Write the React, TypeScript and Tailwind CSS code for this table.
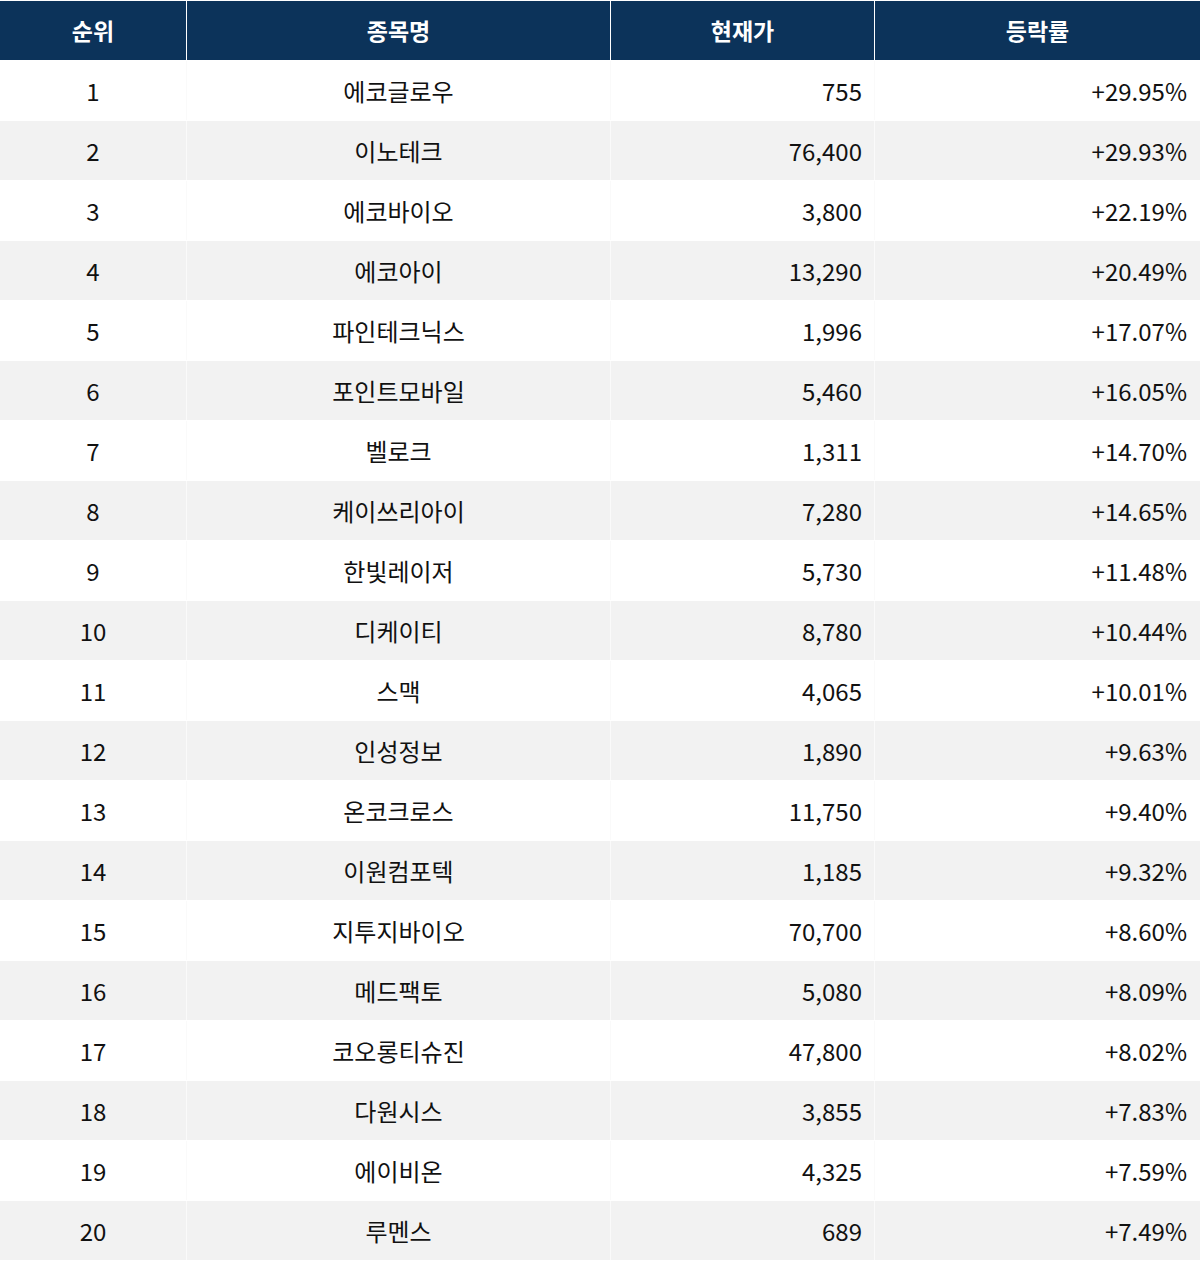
import React from "react";

const rows: [string, string, string, string][] = [
  ["1", "에코글로우", "755", "+29.95%"],
  ["2", "이노테크", "76,400", "+29.93%"],
  ["3", "에코바이오", "3,800", "+22.19%"],
  ["4", "에코아이", "13,290", "+20.49%"],
  ["5", "파인테크닉스", "1,996", "+17.07%"],
  ["6", "포인트모바일", "5,460", "+16.05%"],
  ["7", "벨로크", "1,311", "+14.70%"],
  ["8", "케이쓰리아이", "7,280", "+14.65%"],
  ["9", "한빛레이저", "5,730", "+11.48%"],
  ["10", "디케이티", "8,780", "+10.44%"],
  ["11", "스맥", "4,065", "+10.01%"],
  ["12", "인성정보", "1,890", "+9.63%"],
  ["13", "온코크로스", "11,750", "+9.40%"],
  ["14", "이원컴포텍", "1,185", "+9.32%"],
  ["15", "지투지바이오", "70,700", "+8.60%"],
  ["16", "메드팩토", "5,080", "+8.09%"],
  ["17", "코오롱티슈진", "47,800", "+8.02%"],
  ["18", "다원시스", "3,855", "+7.83%"],
  ["19", "에이비온", "4,325", "+7.59%"],
  ["20", "루멘스", "689", "+7.49%"],
];

export default function App() {
  return (
    <div
      className="w-[1200px] bg-white border-b border-white text-[24px] text-[#111]"
      style={{ fontFamily: '"Noto Sans CJK KR", "Noto Sans", sans-serif' }}
    >
      <div className="flex h-[60px] border-t border-white bg-[#0c335a] text-white font-bold text-[23px]">
        <div className="w-[186px] flex items-center justify-center">순위</div>
        <div className="w-[424px] border-l border-white flex items-center justify-center">종목명</div>
        <div className="w-[264px] border-l border-white flex items-center justify-center">현재가</div>
        <div className="flex-1 border-l border-white flex items-center justify-center">등락률</div>
      </div>
      {rows.map((r, i) => (
        <div
          key={r[0]}
          className={`flex h-[60px] border-t border-white ${i % 2 === 1 ? "bg-[#f2f2f2]" : "bg-white"}`}
        >
          <div className="w-[186px] flex items-center justify-center">{r[0]}</div>
          <div className="w-[424px] border-l border-[#fafafa] flex items-center justify-center">{r[1]}</div>
          <div className="w-[264px] border-l border-[#fafafa] flex items-center justify-end pr-[12px]">{r[2]}</div>
          <div className="flex-1 border-l border-[#fafafa] flex items-center justify-end pr-[13px]">{r[3]}</div>
        </div>
      ))}
    </div>
  );
}
